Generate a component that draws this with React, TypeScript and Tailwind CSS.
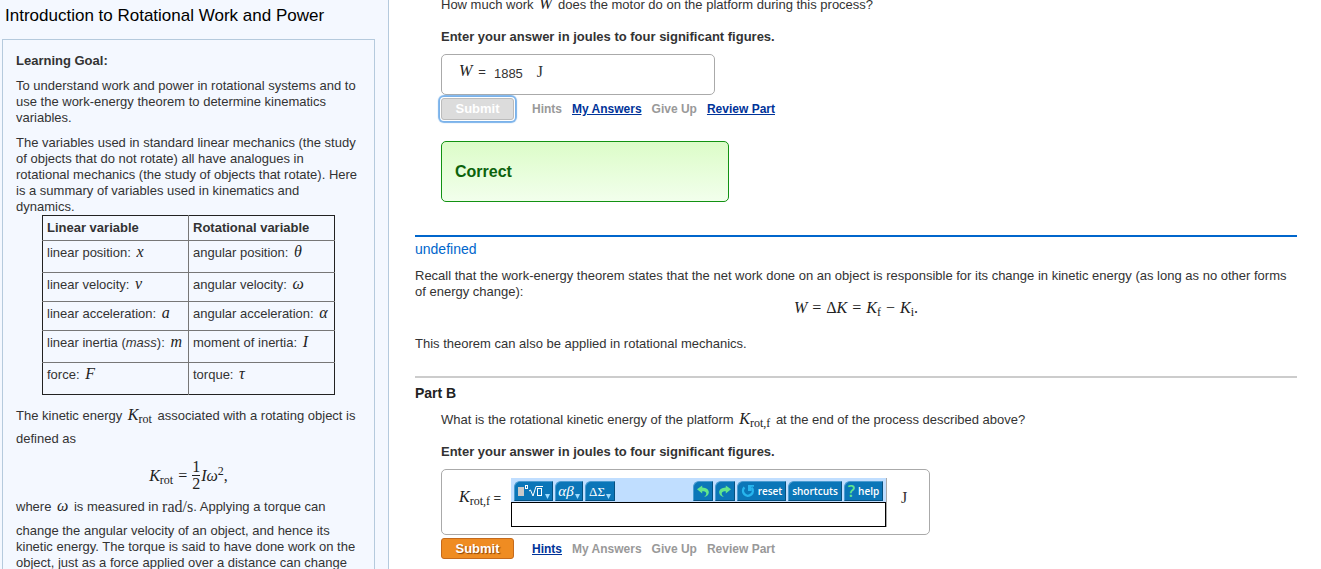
import type { ReactNode } from "react";

type VariableRow = {
  linear: ReactNode;
  linearSymbol: string;
  rotational: string;
  rotationalSymbol: string;
  height: string;
};

const variableRows: VariableRow[] = [
  {
    linear: "linear position:",
    linearSymbol: "x",
    rotational: "angular position:",
    rotationalSymbol: "θ",
    height: "h-8",
  },
  {
    linear: "linear velocity:",
    linearSymbol: "v",
    rotational: "angular velocity:",
    rotationalSymbol: "ω",
    height: "h-[29px]",
  },
  {
    linear: "linear acceleration:",
    linearSymbol: "a",
    rotational: "angular acceleration:",
    rotationalSymbol: "α",
    height: "h-[29px]",
  },
  {
    linear: (
      <>
        linear inertia (<em>mass</em>):
      </>
    ),
    linearSymbol: "m",
    rotational: "moment of inertia:",
    rotationalSymbol: "I",
    height: "h-8",
  },
  {
    linear: "force:",
    linearSymbol: "F",
    rotational: "torque:",
    rotationalSymbol: "τ",
    height: "h-8",
  },
];

// Italic serif symbol with an optional upright subscript
function Sym({ children, sub }: { children: ReactNode; sub?: string }) {
  return (
    <span className="font-['Liberation_Serif',serif] text-[16px] leading-[0] text-[#222]">
      <i>{children}</i>
      {sub && <sub className="text-[12px]">{sub}</sub>}
    </span>
  );
}

// Symbol set inside a sentence, with a little room on both sides
function InlineSym({ children, sub }: { children: ReactNode; sub?: string }) {
  return (
    <span className="mx-[2px]">
      <Sym sub={sub}>{children}</Sym>
    </span>
  );
}

function VariableTable() {
  return (
    <table className="ml-[26px] w-[293px] table-fixed border-collapse border border-[#222] text-left">
      <thead>
        <tr className="h-[25px]">
          <th className="border-r border-[#777] px-1 pt-1 align-top">Linear variable</th>
          <th className="px-1 pt-1 align-top">Rotational variable</th>
        </tr>
      </thead>
      <tbody>
        {variableRows.map((row) => (
          <tr key={row.linearSymbol} className={row.height}>
            <td className="border-t border-r border-[#777] pt-1 pl-1 align-top whitespace-nowrap">
              {row.linear} <InlineSym>{row.linearSymbol}</InlineSym>
            </td>
            <td className="border-t border-[#777] pt-1 pl-1 align-top whitespace-nowrap">
              {row.rotational} <InlineSym>{row.rotationalSymbol}</InlineSym>
            </td>
          </tr>
        ))}
      </tbody>
    </table>
  );
}

function Sidebar() {
  return (
    <aside className="w-[389px] shrink-0 overflow-hidden border-r border-[#b5cadd] bg-[#f4f8ff]">
      <h1 className="px-[5px] pt-1 text-[17px] leading-6 text-black">
        Introduction to Rotational Work and Power
      </h1>
      <section className="mt-[11px] mr-[13px] ml-[2px] border border-[#b5cadd] px-[13px] py-[13px]">
        <h2 className="font-bold">Learning Goal:</h2>
        <p className="mt-[9px]">
          To understand work and power in rotational systems and to use the work-energy theorem to
          determine kinematics variables.
        </p>
        <p className="mt-[9px] pr-[2px]">
          The variables used in standard linear mechanics (the study of objects that do not rotate)
          all have analogues in rotational mechanics (the study of objects that rotate). Here is a
          summary of variables used in kinematics and dynamics.
        </p>
        <VariableTable />
        <p className="mt-[9px] leading-[23px]">
          The kinetic energy <InlineSym sub="rot">K</InlineSym> associated with a rotating object is
          defined as
        </p>
        <div className="mt-[9px] mb-[7px] flex items-center justify-center font-['Liberation_Serif',serif] text-[16px] text-[#222]">
          <span>
            <Sym sub="rot">K</Sym>
          </span>
          <span className="mx-[5px]">=</span>
          <span className="flex flex-col text-center leading-4">
            <span className="border-b border-[#222]">1</span>
            <span>2</span>
          </span>
          <span className="ml-px">
            <i>Iω</i>
            <sup className="text-[12px]">2</sup>,
          </span>
        </div>
        <p>
          where <InlineSym>ω</InlineSym> is measured in{" "}
          <span className="inline-block h-6 align-top font-['Liberation_Serif',serif] text-[16px]">
            rad/s
          </span>
          . Applying a torque can change the angular velocity of an object, and hence its kinetic
          energy. The torque is said to have done work on the object, just as a force applied over a
          distance can change
        </p>
      </section>
    </aside>
  );
}

function ActionLink({ children, active }: { children: ReactNode; active?: boolean }) {
  return (
    <a
      href="#"
      aria-disabled={!active}
      className={active ? "text-[#003399] underline" : "text-[#999]"}
    >
      {children}
    </a>
  );
}

// The undo arrow; redo is the same shape mirrored
function ArrowIcon({ direction }: { direction: "undo" | "redo" }) {
  return (
    <svg
      viewBox="0 0 14 14"
      className={direction === "redo" ? "size-[14px] -scale-x-100" : "size-[14px]"}
    >
      <path
        d="M1 5.2 6.2 1.4v2.2c4.4.1 6.8 2.2 6.6 5.2-.2 2.3-2 3.8-4.8 4.2 1.8-1.2 2.6-2.6 2.2-4-.4-1.3-1.7-1.9-4-1.8v2.2z"
        fill="#63e68b"
      />
    </svg>
  );
}

function ResetIcon() {
  return (
    <svg viewBox="0 0 14 14" className="size-[14px]" fill="none">
      <path d="M3.4 3.4a4.9 4.9 0 1 0 7.4.4" stroke="#27b5ee" strokeWidth="2.4" />
      <path d="M7 1h6v1.8h-2.4V7H7z" fill="#27b5ee" />
    </svg>
  );
}

function TemplateIcon() {
  return (
    <svg viewBox="0 0 26 14" className="h-[14px] w-[26px]" fill="none">
      <rect x="0" y="3" width="6" height="9" fill="#c9c9c9" />
      <rect x="7.5" y="1.5" width="2" height="3" stroke="#fff" />
      <path d="M11 7l1.5-1 2.5 6 3-9.5h7" stroke="#fff" />
      <rect x="19.5" y="4.5" width="4" height="7" stroke="#fff" />
    </svg>
  );
}

function Caret() {
  return (
    <svg viewBox="0 0 5 5" className="mb-px size-[5px] self-end">
      <path d="M0 0h5L2.5 5z" fill="#9edcff" />
    </svg>
  );
}

function ToolButton({
  label,
  width,
  children,
}: {
  label: string;
  width: string;
  children: ReactNode;
}) {
  return (
    <button
      type="button"
      aria-label={label}
      className={`flex h-5 items-center justify-center gap-px rounded-tl-[6px] border border-t-[#4a9bd0] border-r-[#06507f] border-b-[#06507f] border-l-[#4a9bd0] bg-[#0b76b8] font-['Open_Sans',sans-serif] text-[10px] leading-none font-semibold text-white ${width}`}
    >
      {children}
    </button>
  );
}

function EquationEditor() {
  return (
    <div className="w-[376px] border-r border-[#aaa]">
      <div className="flex justify-between bg-[#c0deff] px-[3px] pt-[3px] pb-px">
        <div className="flex gap-[2px]">
          <ToolButton label="Templates" width="w-[39px]">
            <TemplateIcon />
            <Caret />
          </ToolButton>
          <ToolButton label="Greek letters" width="w-7">
            <span className="font-['Liberation_Serif',serif] text-[15px] font-normal italic">αβ</span>
            <Caret />
          </ToolButton>
          <ToolButton label="Capital Greek letters" width="w-[30px]">
            <span className="font-['Liberation_Serif',serif] text-[13px] font-normal">ΔΣ</span>
            <Caret />
          </ToolButton>
        </div>
        <div className="flex gap-[2px]">
          <ToolButton label="Undo" width="w-5">
            <ArrowIcon direction="undo" />
          </ToolButton>
          <ToolButton label="Redo" width="w-5">
            <ArrowIcon direction="redo" />
          </ToolButton>
          <ToolButton label="reset" width="w-[49px]">
            <ResetIcon />
            <span className="ml-[2px]">reset</span>
          </ToolButton>
          <ToolButton label="shortcuts" width="w-[54px]">
            shortcuts
          </ToolButton>
          <ToolButton label="help" width="w-[39px]">
            <span className="text-[16px] text-[#63e68b]">?</span>
            <span className="ml-[2px]">help</span>
          </ToolButton>
        </div>
      </div>
      <input
        id="rotational-energy"
        type="text"
        className="block h-[25px] w-full border border-black bg-white px-1 outline-none"
      />
    </div>
  );
}

function PartA() {
  return (
    <section className="ml-[26px]">
      <p>
        How much work <InlineSym>W</InlineSym> does the motor do on the platform during this
        process?
      </p>
      <p className="mt-4 font-bold">Enter your answer in joules to four significant figures.</p>
      <div className="mt-[9px] flex h-[41px] w-[274px] items-start gap-[6px] rounded-[5px] border border-[#aaa] px-[17px] pt-[9px]">
        <span>
          <Sym>W</Sym>
        </span>
        <span>=</span>
        <span className="ml-[2px] pt-[2px]">1885</span>
        <span className="ml-2 font-['Liberation_Serif',serif] text-[16px]">J</span>
      </div>
      <div className="mt-[3px] flex items-center gap-[10px] text-[12px] font-bold">
        <button
          type="button"
          className="mr-2 h-[22px] w-[73px] rounded-[3px] border border-[#bbb] bg-[#dcdcdc] text-[13px] text-white shadow-[0_0_0_1px_#fff,0_0_1px_3px_#7ab2ea]"
        >
          Submit
        </button>
        <ActionLink>Hints</ActionLink>
        <ActionLink active>My Answers</ActionLink>
        <ActionLink>Give Up</ActionLink>
        <ActionLink active>Review Part</ActionLink>
      </div>
      <div className="mt-[21px] flex h-[61px] w-72 items-center rounded-[5px] border border-[#129212] bg-linear-to-b from-[#dcfcc8] to-[#f2ffec] px-[13px] text-[16px] font-bold text-[#0c630c]">
        Correct
      </div>
    </section>
  );
}

function Transition() {
  return (
    <section className="mt-[33px] border-t-2 border-[#0066cc]">
      <h2 className="pt-[2px] text-[14px] leading-5 text-[#0066cc]">undefined</h2>
      <p className="mt-[9px]">
        Recall that the work-energy theorem states that the net work done on an object is
        responsible for its change in kinetic energy (as long as no other forms of energy change):
      </p>
      <p className="text-center font-['Liberation_Serif',serif] text-[16px] text-[#222]">
        <Sym>W</Sym>
        <span className="mx-[5px]">=</span>Δ<Sym>K</Sym>
        <span className="mx-[5px]">=</span>
        <Sym sub="f">K</Sym>
        <span className="mx-[5px]">−</span>
        <Sym sub="i">K</Sym>.
      </p>
      <p className="mt-5">This theorem can also be applied in rotational mechanics.</p>
    </section>
  );
}

function PartB() {
  return (
    <section className="mt-6 border-t-2 border-[#ccc]">
      <h2 className="pt-[5px] text-[14px] leading-5 font-bold text-[#222]">Part B</h2>
      <div className="ml-[26px]">
        <p className="mt-[9px]">
          What is the rotational kinetic energy of the platform{" "}
          <InlineSym sub="rot,f">K</InlineSym> at the end of the process described above?
        </p>
        <p className="mt-4 font-bold">Enter your answer in joules to four significant figures.</p>
        <div className="mt-[9px] flex h-[66px] w-[489px] items-start rounded-[5px] border border-[#aaa] pt-2 pl-[17px]">
          <label htmlFor="rotational-energy" className="w-[52px] pt-3 whitespace-nowrap">
            <Sym sub="rot,f">K</Sym> =
          </label>
          <EquationEditor />
          <span className="ml-[14px] pt-3 font-['Liberation_Serif',serif] text-[16px]">J</span>
        </div>
        <div className="mt-[3px] flex items-center gap-[10px] text-[12px] font-bold">
          <button
            type="button"
            className="mr-2 h-[21px] w-[73px] rounded-[3px] border border-[#c56a1c] bg-[#ef8c22] text-[13px] text-white [text-shadow:1px_1px_1px_#8a4508]"
          >
            Submit
          </button>
          <ActionLink active>Hints</ActionLink>
          <ActionLink>My Answers</ActionLink>
          <ActionLink>Give Up</ActionLink>
          <ActionLink>Review Part</ActionLink>
        </div>
      </div>
    </section>
  );
}

export default function App() {
  return (
    <div className="flex h-screen overflow-hidden bg-white font-['Liberation_Sans',Arial,sans-serif] text-[13px] leading-4 text-[#333]">
      <Sidebar />
      <main className="-mt-[3px] min-w-0 flex-1 pr-6 pl-[26px]">
        <PartA />
        <Transition />
        <PartB />
      </main>
    </div>
  );
}
